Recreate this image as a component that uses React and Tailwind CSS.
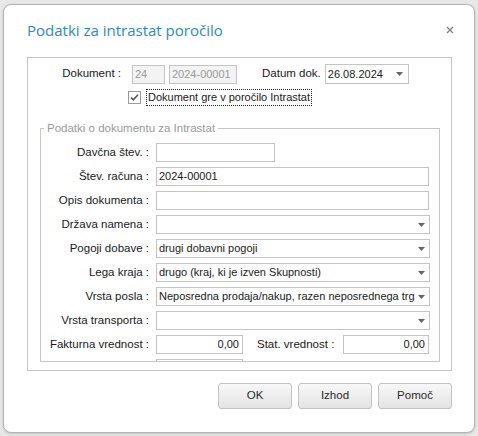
const font = { fontFamily: '"Liberation Sans", Arial, sans-serif' };

function Arrow() {
  return (
    <svg width="7" height="4" viewBox="0 0 7 4" className="shrink-0">
      <path d="M0 0h7L3.5 4z" fill="#666" />
    </svg>
  );
}

function TextBox({ value = '', w = 'w-[273px]', right = false, disabled = false }) {
  return (
    <div
      className={`${w} h-[19px] shrink-0 border border-[#c4c4c4] px-[2px] flex items-center text-[11px] ${
        right ? 'justify-end pr-[3px]' : ''
      } ${disabled ? 'bg-[#f3f3f3] text-[#9a9a9a]' : 'bg-white text-[#1a1a1a]'}`}
    >
      <span className="whitespace-nowrap overflow-hidden">{value}</span>
    </div>
  );
}

function Combo({ value = '', w = 'w-[274px]' }) {
  return (
    <div
      className={`${w} h-[19px] shrink-0 border border-[#c4c4c4] bg-white pl-[2px] pr-[4px] flex items-center justify-between text-[11px] text-[#1a1a1a]`}
    >
      <span className="whitespace-nowrap">{value}</span>
      <Arrow />
    </div>
  );
}

const rows = [
  { label: 'Davčna štev. :', field: <TextBox w="w-[119px]" /> },
  { label: 'Štev. računa :', field: <TextBox value="2024-00001" /> },
  { label: 'Opis dokumenta :', field: <TextBox /> },
  { label: 'Država namena :', field: <Combo /> },
  { label: 'Pogoji dobave :', field: <Combo value="drugi dobavni pogoji" /> },
  { label: 'Lega kraja :', field: <Combo value="drugo (kraj, ki je izven Skupnosti)" /> },
  { label: 'Vrsta posla :', field: <Combo value="Neposredna prodaja/nakup, razen neposrednega trg" /> },
  { label: 'Vrsta transporta :', field: <Combo /> },
];

export default function App() {
  return (
    <div className="w-[478px] h-[436px] bg-[#e8e8e8] pt-[4px] pl-[3px] text-[11.5px]" style={font}>
      <div className="w-[472px] h-[429px] bg-white border border-[#b2b2b2] rounded-[8px] shadow-[0_1px_3px_rgba(0,0,0,0.15)] flex flex-col">
        <div className="flex items-center justify-between pl-[23px] pr-[20px] pt-[13px]">
          <span
            className="text-[15px] leading-[24px] text-[#2a8ad6]"
            style={{ fontFamily: '"Open Sans", "Noto Sans", sans-serif' }}
          >
            Podatki za intrastat poročilo
          </span>
          <svg width="8" height="8" viewBox="0 0 8 8">
            <path d="M1 1l6 6M7 1L1 7" stroke="#808080" strokeWidth="1.3" />
          </svg>
        </div>

        <div className="ml-[23px] mt-[15px] w-[425px] h-[314px] border border-[#c6c6c6] overflow-hidden">
          <div className="flex items-center h-[20px] mt-[6px]">
            <span className="w-[93px] text-right text-[#1a1a1a] whitespace-nowrap">Dokument :</span>
            <div className="ml-[11px] flex gap-[4px]">
              <TextBox w="w-[33px]" value="24" disabled />
              <TextBox w="w-[68px]" value="2024-00001" disabled />
            </div>
            <span className="ml-[25px] text-[#1a1a1a] whitespace-nowrap">Datum dok.</span>
            <div className="ml-[4px] w-[84px] h-[20px] border border-[#c4c4c4] pl-[2px] pr-[5px] flex items-center justify-between text-[11px] text-[#1a1a1a]">
              <span>26.08.2024</span>
              <Arrow />
            </div>
          </div>

          <div className="flex items-center h-[17px] mt-[5px] pl-[100px]">
            <svg width="13" height="13" viewBox="0 0 13 13" className="shrink-0">
              <rect x="0.5" y="0.5" width="12" height="12" fill="#fff" stroke="#9c9c9c" />
              <path d="M3 6.5l2.3 2.4L10 3.8" fill="none" stroke="#555" strokeWidth="1.6" />
            </svg>
            <span className="ml-[5px] h-[17px] px-[1px] border border-dotted border-[#222] flex items-center text-[11px] text-[#1a1a1a] whitespace-nowrap">
              Dokument gre v poročilo Intrastat
            </span>
          </div>

          <fieldset className="ml-[12px] mt-[15px] w-[400px] h-[241px] border border-[#c6c6c6] overflow-hidden pt-[8px]">
            <legend className="ml-[3px] px-[3px] text-[#9a9a9a] leading-[14px]">
              Podatki o dokumentu za Intrastat
            </legend>
            <div className="flex flex-col gap-[5px]">
              {rows.map((r) => (
                <div key={r.label} className="flex items-center h-[19px]">
                  <span className="w-[108px] text-right text-[#1a1a1a] whitespace-nowrap">{r.label}</span>
                  <div className="ml-[7px]">{r.field}</div>
                </div>
              ))}
              <div className="flex items-center h-[19px]">
                <span className="w-[108px] text-right text-[#1a1a1a] whitespace-nowrap">Fakturna vrednost :</span>
                <div className="ml-[7px]">
                  <TextBox w="w-[87px]" value="0,00" right />
                </div>
                <span className="ml-[14px] w-[86px] text-[#1a1a1a] whitespace-nowrap">Stat. vrednost :</span>
                <TextBox w="w-[86px]" value="0,00" right />
              </div>
              <div className="flex items-center h-[19px]">
                <span className="w-[108px]" />
                <div className="ml-[7px]">
                  <TextBox w="w-[87px]" />
                </div>
              </div>
            </div>
          </fieldset>
        </div>

        <div className="flex justify-end gap-[6px] mt-[12px] pr-[22px]">
          {['OK', 'Izhod', 'Pomoč'].map((b) => (
            <button
              key={b}
              className="w-[74px] h-[26px] rounded-[3px] border border-[#c2c2c2] bg-gradient-to-b from-[#f7f7f7] to-[#e4e4e4] text-[#2a2a2a] text-[11.5px] font-normal"
              style={font}
            >
              {b}
            </button>
          ))}
        </div>
      </div>
    </div>
  );
}
